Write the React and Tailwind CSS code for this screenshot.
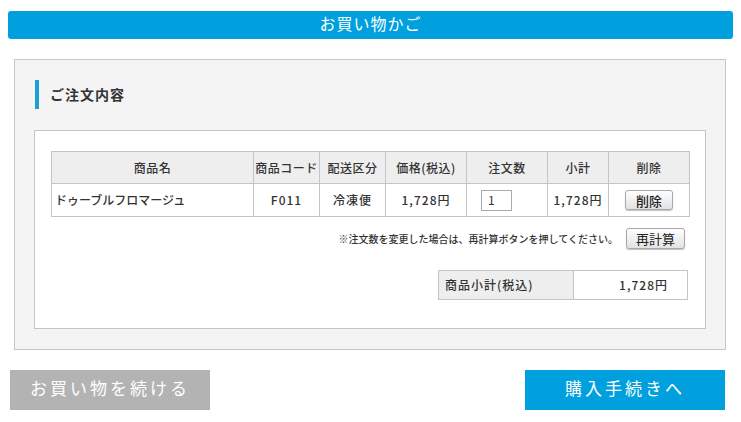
import React from "react";

const sans = { fontFamily: '"Noto Sans CJK JP", "Liberation Sans", sans-serif' };
const serif = { fontFamily: '"Liberation Serif", "Noto Sans CJK JP", serif' };

const cols = [
  { label: "商品名", w: "w-[202px]" },
  { label: "商品コード", w: "w-[66px]" },
  { label: "配送区分", w: "w-[66px]" },
  { label: "価格(税込)", w: "w-[81px]" },
  { label: "注文数", w: "w-[81px]" },
  { label: "小計", w: "w-[61px]" },
  { label: "削除", w: "w-[81px]" },
];

const GrayButton = ({ children, className = "" }) => (
  <button
    className={`rounded-[3px] border border-[#a8a8a8] bg-gradient-to-b from-white to-[#e2e2e2] text-[13px] leading-none text-[#222] shadow-[0_1px_1px_rgba(0,0,0,0.25)] ${className}`}
  >
    {children}
  </button>
);

const cell = "border border-[#c4c4c4] whitespace-nowrap p-0";

export default function App() {
  return (
    <div className="w-[741px] h-[422px] bg-white overflow-hidden" style={sans}>
      {/* Title bar */}
      <div className="pt-[11px] px-2">
        <div
          className="h-[28px] rounded-[3px] bg-[#00a0de] flex items-center justify-center text-white text-[16px] tracking-[1px]"
          style={serif}
        >
          お買い物かご
        </div>
      </div>

      {/* Panel */}
      <div className="mt-[20px] ml-[14px] mr-[15px] h-[291px] border border-[#c6c6c6] bg-[#f4f4f4] px-[19px] pt-[20px]">
        <div className="ml-[1px] h-[29px] border-l-[4px] border-[#1b9fd0] pl-[11px] flex items-center text-[14px] font-bold text-[#333] tracking-[1px]">
          ご注文内容
        </div>

        <div className="mt-[21px] h-[199px] border border-[#c4c4c4] bg-white px-[16px] pt-[20px]">
          {/* Cart table */}
          <table className="table-fixed w-[638px] border-collapse text-[12px] font-medium text-[#333]">
            <thead>
              <tr className="h-[32px] bg-[#eeeeee]">
                {cols.map((c) => (
                  <th
                    key={c.label}
                    className={`${c.w} ${cell} font-medium text-center tracking-[0.5px]`}
                  >
                    {c.label}
                  </th>
                ))}
              </tr>
            </thead>
            <tbody>
              <tr className="h-[33px]">
                <td className={`${cell} pl-[3px]`}>ドゥーブルフロマージュ</td>
                <td className={`${cell} text-center tracking-[1px]`}>F011</td>
                <td className={`${cell} text-center tracking-[1px]`}>冷凍便</td>
                <td className={`${cell} text-center tracking-[1px]`}>1,728円</td>
                <td className={`${cell} pl-[14px]`}>
                  <div className="flex items-center w-[31px] h-[21px] border border-[#aaaaaa] pl-[6px] text-[12px] leading-none font-normal">
                    1
                  </div>
                </td>
                <td className={`${cell} text-center tracking-[1px]`}>1,728円</td>
                <td className={`${cell} text-center`}>
                  <GrayButton className="w-[48px] h-[20px]">削除</GrayButton>
                </td>
              </tr>
            </tbody>
          </table>

          {/* Recalc note */}
          <div className="mt-[11px] flex items-center justify-end pr-[4px]">
            <span className="text-[10px] font-medium text-[#333]">
              ※注文数を変更した場合は、再計算ボタンを押してください。
            </span>
            <GrayButton className="ml-[8px] w-[59px] h-[21px]">再計算</GrayButton>
          </div>

          {/* Subtotal */}
          <div className="mt-[21px] flex justify-end pr-[1px]">
            <div className="flex h-[30px] w-[250px] border border-[#c4c4c4] text-[12px] font-medium text-[#333] tracking-[1px]">
              <div className="w-[135px] bg-[#eeeeee] border-r border-[#c4c4c4] flex items-center pl-[6px]">
                商品小計(税込)
              </div>
              <div className="flex-1 flex items-center justify-end pr-[19px]">1,728円</div>
            </div>
          </div>
        </div>
      </div>

      {/* Bottom buttons */}
      <div className="mt-[20px] flex justify-between pl-[10px] pr-[16px]">
        <button
          className="w-[200px] h-[40px] bg-[#b3b3b3] text-white text-[17px] tracking-[3px]"
          style={serif}
        >
          お買い物を続ける
        </button>
        <button
          className="w-[200px] h-[40px] bg-[#00a0de] text-white text-[17px] tracking-[3px]"
          style={serif}
        >
          購入手続きへ
        </button>
      </div>
    </div>
  );
}
